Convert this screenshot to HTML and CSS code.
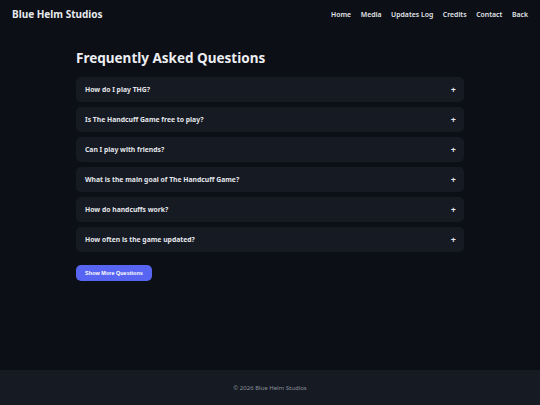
FILE: index.html
```html
<!DOCTYPE html>
<html lang="en">
<head>
<meta charset="utf-8">
<title>FAQ - Blue Helm Studios</title>
<link rel="stylesheet" href="styles.css">
</head>
<body>
<div class="page">
  <header class="site-header">
    <div class="brand">Blue Helm Studios</div>
    <nav class="nav">
      <a href="#">Home</a>
      <a href="#">Media</a>
      <a href="#">Updates Log</a>
      <a href="#">Credits</a>
      <a href="#">Contact</a>
      <a href="#">Back</a>
    </nav>
  </header>
  <main class="main">
    <h1 class="title">Frequently Asked Questions</h1>
    <div class="faq-list">
      <div class="faq-item"><span>How do I play THG?</span><span class="plus">+</span></div>
      <div class="faq-item"><span>Is The Handcuff Game free to play?</span><span class="plus">+</span></div>
      <div class="faq-item"><span>Can I play with friends?</span><span class="plus">+</span></div>
      <div class="faq-item"><span>What is the main goal of The Handcuff Game?</span><span class="plus">+</span></div>
      <div class="faq-item"><span>How do handcuffs work?</span><span class="plus">+</span></div>
      <div class="faq-item"><span>How often is the game updated?</span><span class="plus">+</span></div>
    </div>
    <button class="more-btn">Show More Questions</button>
  </main>
  <footer class="site-footer">© 2026 Blue Helm Studios</footer>
</div>
</body>
</html>
```
FILE: styles.css
```css
* { box-sizing: border-box; }
html, body { margin: 0; padding: 0; }
body {
  background: #0c0f16;
  color: #e6e8ec;
  font-family: "Noto Sans", "Open Sans", sans-serif;
}
.page {
  min-height: 405px;
  display: flex;
  flex-direction: column;
}
.site-header {
  height: 28px;
  padding: 0 12px;
  display: flex;
  align-items: center;
  justify-content: space-between;
}
.brand {
  font-size: 10px;
  font-weight: 700;
  color: #e8eaee;
}
.nav {
  display: flex;
  gap: 9.6px;
}
.nav a {
  color: #e2e5ea;
  text-decoration: none;
  font-size: 6.9px;
  font-weight: 600;
}
.main {
  flex: 1;
  width: 388px;
  margin: 0 auto;
  padding-top: 21px;
}
.title {
  margin: 0 0 10px;
  font-size: 13.5px;
  font-weight: 700;
  line-height: 18px;
  color: #eceef2;
}
.faq-list {
  display: flex;
  flex-direction: column;
  gap: 5px;
}
.faq-item {
  height: 25px;
  background: #161a23;
  border-radius: 5px;
  padding: 0 8px 0 9px;
  display: flex;
  align-items: center;
  justify-content: space-between;
  font-size: 6.8px;
  font-weight: 700;
  color: #e4e7ec;
}
.plus {
  font-size: 9px;
  font-weight: 700;
}
.more-btn {
  display: block;
  margin-top: 13px;
  height: 16px;
  width: 76px;
  padding: 0;
  border: none;
  border-radius: 5px;
  background: #5865f2;
  color: #ffffff;
  font-family: "Liberation Sans", Arial, sans-serif;
  font-size: 5.5px;
  font-weight: 700;
}
.site-footer {
  height: 35px;
  background: #161a22;
  color: #8a909c;
  font-size: 6px;
  display: flex;
  align-items: center;
  justify-content: center;
}
```
